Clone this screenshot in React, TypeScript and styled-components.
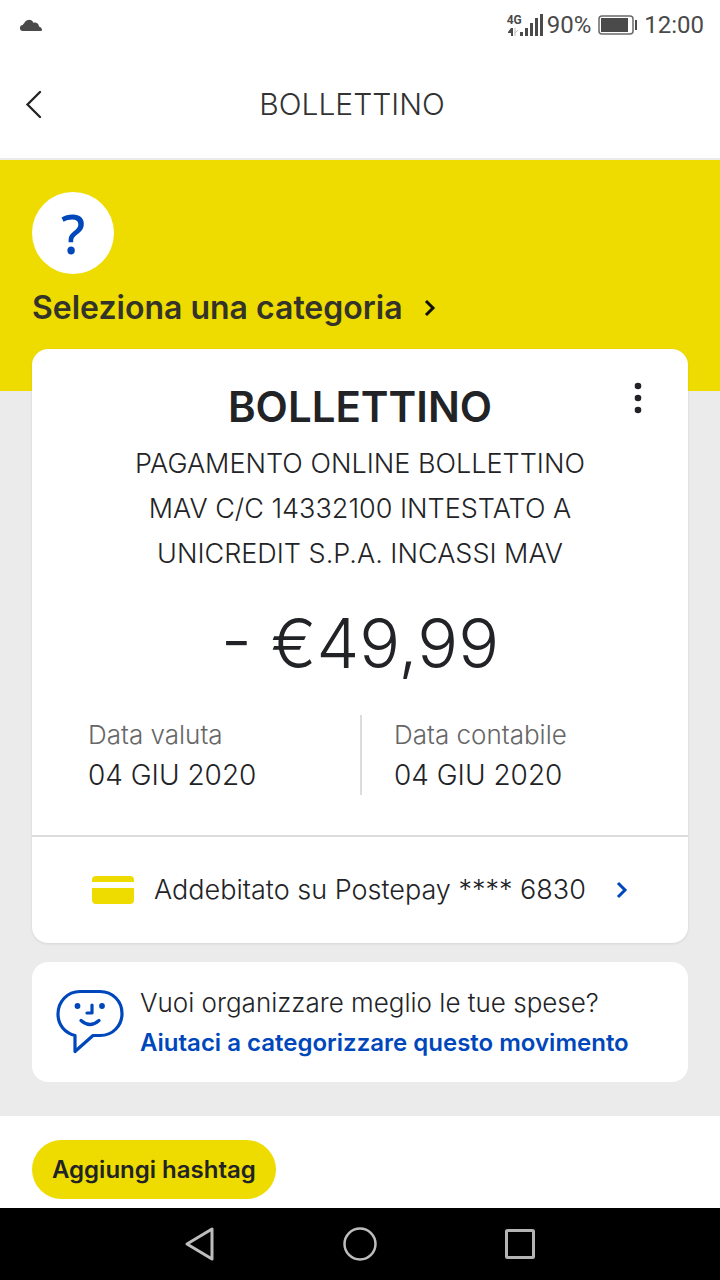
import React from "react";
import styled, { createGlobalStyle } from "styled-components";

const GlobalStyle = createGlobalStyle`
  * { box-sizing: border-box; }
  body {
    margin: 0;
    background: #ffffff;
    color: #222326;
    font-family: Inter, "Noto Sans", sans-serif;
    font-weight: 300;
  }
  button { font: inherit; color: inherit; border: 0; padding: 0; background: none; cursor: pointer; }
  h1, h2, p, dl, dt, dd { margin: 0; }
  a { color: inherit; text-decoration: none; }
  svg { display: block; flex: none; }
`;

const Screen = styled.div`
  display: flex;
  flex-direction: column;
  min-height: 100vh;
`;

const StatusBar = styled.div`
  display: flex;
  align-items: center;
  justify-content: space-between;
  height: 50px;
  padding: 0 16px 0 20px;
  color: #4a4a4a;
  font-family: Roboto, sans-serif;
  font-size: 24px;
  line-height: 32px;
  font-weight: 400;
`;

const StatusGroup = styled.div`
  display: flex;
  align-items: center;
  gap: 7px;
`;

const Signal = styled.div`
  display: flex;
  align-items: center;
  margin-right: -3px;
`;

const Network = styled.div`
  display: flex;
  flex-direction: column;
  gap: 2px;
  width: 13px;
  font-family: "Liberation Sans Narrow", Roboto, sans-serif;
  font-size: 12px;
  line-height: 12px;
  font-weight: 700;
`;

const TopBar = styled.header`
  display: grid;
  grid-template-columns: 68px 1fr 84px;
  align-items: center;
  height: 110px;
  border-bottom: 2px solid #ebebeb;
`;

const BackButton = styled.button`
  display: flex;
  justify-content: center;
  align-items: center;
  height: 64px;
`;

const PageTitle = styled.h1`
  font-size: 30px;
  line-height: 40px;
  font-weight: 300;
  text-align: center;
  color: #333333;
`;

const Main = styled.main`
  display: flex;
  flex-direction: column;
  flex: 1;
  background: #ebebeb;
`;

const Hero = styled.section`
  padding: 32px 32px 59px;
  background: #eedc00;
`;

const CategoryBadge = styled.div`
  display: flex;
  align-items: center;
  justify-content: center;
  width: 82px;
  height: 82px;
  border-radius: 50%;
  background: #ffffff;
  color: #0047bb;
  font-family: "Noto Sans", sans-serif;
  font-size: 54px;
  line-height: 80px;
  font-weight: 500;
`;

const CategoryButton = styled.button`
  display: flex;
  align-items: center;
  gap: 20px;
  margin-top: 10px;
  font-size: 32px;
  line-height: 48px;
  font-weight: 600;
  color: #333329;
`;

const Cards = styled.div`
  display: flex;
  flex-direction: column;
  gap: 19px;
  margin-top: -42px;
  padding: 0 32px 34px;
`;

const Card = styled.section`
  position: relative;
  border-radius: 16px;
  background: #ffffff;
`;

const PaymentCard = styled(Card)`
  box-shadow: 0 1px 3px #00000018;
`;

const Summary = styled.div`
  padding: 33px 56px 40px;
  text-align: center;
`;

const MenuButton = styled.button`
  position: absolute;
  top: 25px;
  right: 26px;
  display: flex;
  align-items: center;
  justify-content: center;
  width: 48px;
  height: 48px;
`;

const PaymentTitle = styled.h2`
  font-size: 42px;
  line-height: 50px;
  font-weight: 600;
`;

const Description = styled.p`
  max-width: 480px;
  margin: 9px auto 0;
  font-size: 27px;
  line-height: 45px;
`;

const Amount = styled.p`
  margin-top: 22px;
  font-size: 68px;
  line-height: 90px;
`;

const Dates = styled.dl`
  display: grid;
  grid-template-columns: 1fr 1fr;
  margin-top: 27px;
  text-align: left;
`;

const DateItem = styled.div`
  height: 80px;
  & + & {
    padding-left: 32px;
    border-left: 2px solid #dcdcdc;
  }
`;

const DateLabel = styled.dt`
  font-size: 26px;
  line-height: 40px;
  color: #666666;
`;

const DateValue = styled.dd`
  font-size: 28px;
  line-height: 40px;
`;

const AccountLink = styled.a`
  display: flex;
  align-items: center;
  height: 108px;
  padding: 0 59px 0 60px;
  border-top: 2px solid #dcdcdc;
  font-size: 27px;
  line-height: 40px;
`;

const AccountText = styled.span`
  flex: 1;
  margin-left: 20px;
  white-space: nowrap;
`;

const TipCard = styled(Card)`
  display: flex;
  align-items: center;
  gap: 16px;
  height: 120px;
  padding: 0 24px;
`;

const TipText = styled.div`
  padding-top: 2px;
  font-size: 26px;
  line-height: 40px;
`;

const TipLink = styled.a`
  display: block;
  font-size: 24px;
  font-weight: 600;
  color: #0047bb;
  white-space: nowrap;
`;

const Tags = styled.section`
  padding: 24px 32px 9px;
  background: #ffffff;
`;

const TagButton = styled.button`
  height: 59px;
  padding: 0 20px;
  border-radius: 30px;
  background: #eedc00;
  font-size: 24px;
  line-height: 40px;
  font-weight: 600;
`;

const NavBar = styled.nav`
  display: flex;
  justify-content: center;
  gap: 112px;
  height: 72px;
  background: #000000;
`;

const NavButton = styled.button`
  display: flex;
  align-items: center;
  justify-content: center;
  width: 48px;
`;

const Chevron = ({ color }: { color: string }) => (
  <svg width="14" height="18" viewBox="0 0 14 18" fill="none" stroke={color} strokeWidth="3" aria-hidden="true">
    <path d="M3 2l7 7-7 7" />
  </svg>
);

export default function App() {
  return (
    <Screen>
      <GlobalStyle />
      <StatusBar>
        <svg width="22" height="12" viewBox="0 0 22 12" fill="#4a4a4a" aria-hidden="true">
          <path d="M3 12a3 3 0 0 1-.2-6Q3.500 4.500 4.200 4.300A5 5 0 0 1 13.500 3.800a4 4 0 0 1 5.500 3.700Q22 8.500 22 10.500T20 12z" />
        </svg>
        <StatusGroup>
          <Signal>
            <Network>
              <span>4G</span>
              <svg width="13" height="8" viewBox="0 0 13 8" aria-hidden="true">
                <path d="M1 4l3-4h2v8H4V5H1z" fill="#4a4a4a" />
                <path d="M8 0v8M8 5l3-3" stroke="#bbbbbb" fill="none" />
              </svg>
            </Network>
            <svg width="23" height="24" viewBox="0 0 23 24" fill="#4a4a4a" aria-hidden="true">
              <path d="M0 19h3v4H0zM5 15h3v8H5zM10 10h3v13h-3zM15 5h3v18h-3zM20 1h3v22h-3z" />
            </svg>
          </Signal>
          <span>90%</span>
          <svg width="39" height="20" viewBox="0 0 39 20" aria-hidden="true">
            <rect x="1" y="1" width="34" height="18" rx="3" fill="none" stroke="#6a6a6a" strokeWidth="1.500" />
            <path d="M3 3h27v14H3zM37 5h2v10h-2z" fill="#4a4a4a" />
          </svg>
          <span>12:00</span>
        </StatusGroup>
      </StatusBar>

      <TopBar>
        <BackButton aria-label="Indietro">
          <svg width="18" height="28" viewBox="0 0 18 28" fill="none" stroke="#222326" strokeWidth="2.300" strokeLinecap="round" aria-hidden="true">
            <path d="M15 2L2.500 14.500 15 27" />
          </svg>
        </BackButton>
        <PageTitle>BOLLETTINO</PageTitle>
      </TopBar>

      <Main>
        <Hero>
          <CategoryBadge>?</CategoryBadge>
          <CategoryButton>
            Seleziona una categoria
            <Chevron color="#111111" />
          </CategoryButton>
        </Hero>

        <Cards>
          <PaymentCard>
            <MenuButton aria-label="Altre opzioni">
              <svg width="8" height="32" viewBox="0 0 8 32" fill="#222326" aria-hidden="true">
                <circle cx="4" cy="4" r="3.300" />
                <circle cx="4" cy="16" r="3.300" />
                <circle cx="4" cy="28" r="3.300" />
              </svg>
            </MenuButton>
            <Summary>
              <PaymentTitle>BOLLETTINO</PaymentTitle>
              <Description>
                PAGAMENTO ONLINE BOLLETTINO MAV C/C 14332100 INTESTATO A UNICREDIT S.P.A. INCASSI MAV
              </Description>
              <Amount>- €49,99</Amount>
              <Dates>
                <DateItem>
                  <DateLabel>Data valuta</DateLabel>
                  <DateValue>04 GIU 2020</DateValue>
                </DateItem>
                <DateItem>
                  <DateLabel>Data contabile</DateLabel>
                  <DateValue>04 GIU 2020</DateValue>
                </DateItem>
              </Dates>
            </Summary>
            <AccountLink href="#postepay">
              <svg width="42" height="28" viewBox="0 0 42 28" fill="#eedc00" aria-hidden="true">
                <path d="M0 6V4q0-4 4-4h34q4 0 4 4v2zM0 12h42v12q0 4-4 4H4q-4 0-4-4z" />
              </svg>
              <AccountText>Addebitato su Postepay **** 6830</AccountText>
              <Chevron color="#0047bb" />
            </AccountLink>
          </PaymentCard>

          <TipCard>
            <svg width="68" height="66" viewBox="0 0 68 66" fill="none" stroke="#0047bb" strokeWidth="3.200" strokeLinecap="round" strokeLinejoin="round" aria-hidden="true">
              <path d="M24 2.500h20c13 0 22 10 22 22s-9 22-22 22h-7L19 62.500V46.500C9 44 2 36 2 25 2 13 11 2.500 24 2.500z" />
              <path d="M36 16v8h-5M25 31.500q9 8 18 0" />
              <circle cx="21.500" cy="17" r="1.300" fill="#0047bb" />
              <circle cx="46" cy="17" r="1.300" fill="#0047bb" />
            </svg>
            <TipText>
              <p>Vuoi organizzare meglio le tue spese?</p>
              <TipLink href="#categoria">Aiutaci a categorizzare questo movimento</TipLink>
            </TipText>
          </TipCard>
        </Cards>
      </Main>

      <Tags>
        <TagButton>Aggiungi hashtag</TagButton>
      </Tags>

      <NavBar>
        <NavButton aria-label="Indietro">
          <svg width="32" height="36" viewBox="0 0 32 36" fill="none" stroke="#bdbdbd" strokeWidth="3" strokeLinejoin="round" aria-hidden="true">
            <path d="M28 3v30L3 18z" />
          </svg>
        </NavButton>
        <NavButton aria-label="Home">
          <svg width="34" height="34" viewBox="0 0 34 34" fill="none" stroke="#bdbdbd" strokeWidth="2.500" aria-hidden="true">
            <circle cx="17" cy="17" r="15.500" />
          </svg>
        </NavButton>
        <NavButton aria-label="App recenti">
          <svg width="30" height="30" viewBox="0 0 30 30" fill="none" stroke="#b4b4b4" strokeWidth="3" aria-hidden="true">
            <rect x="1.500" y="1.500" width="27" height="27" rx="1" />
          </svg>
        </NavButton>
      </NavBar>
    </Screen>
  );
}
